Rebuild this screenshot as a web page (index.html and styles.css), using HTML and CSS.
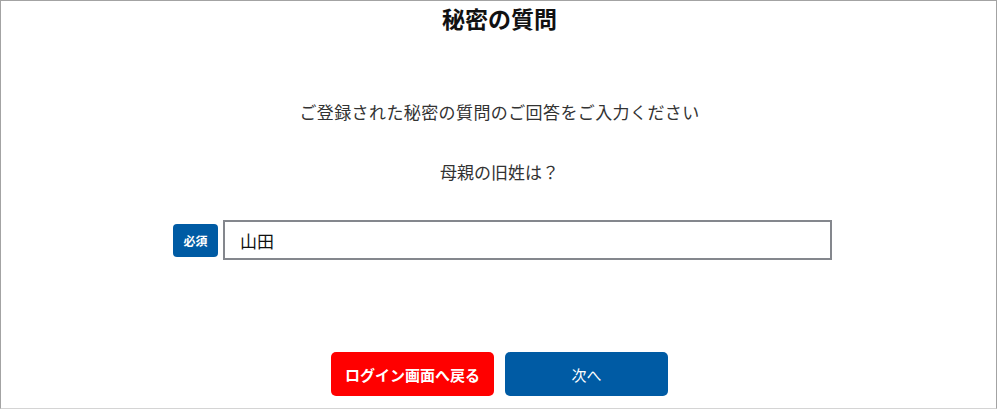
FILE: index.html
```html
<!DOCTYPE html>
<html lang="ja">
<head>
<meta charset="utf-8">
<title>秘密の質問</title>
<link rel="stylesheet" href="styles.css">
</head>
<body>
<div class="frame">
  <h1 class="title">秘密の質問</h1>
  <p class="lead">ご登録された秘密の質問のご回答をご入力ください</p>
  <p class="question">母親の旧姓は？</p>
  <div class="answer-row">
    <span class="badge">必須</span>
    <input class="answer" type="text" value="山田">
  </div>
  <div class="actions">
    <button class="btn btn-back" type="button">ログイン画面へ戻る</button>
    <button class="btn btn-next" type="button">次へ</button>
  </div>
</div>
</body>
</html>
```
FILE: styles.css
```css
* { box-sizing: border-box; }
html, body {
  margin: 0;
  padding: 0;
  background: #fff;
}
body {
  font-family: "Noto Sans CJK JP", "Noto Sans", sans-serif;
  color: #333;
}
.frame {
  width: 997px;
  height: 409px;
  border-top: 1px solid #a3a3a3;
  border-left: 1px solid #a3a3a3;
  border-right: 1px solid #a3a3a3;
  border-bottom: 1px solid #d4d4d4;
  display: flex;
  flex-direction: column;
  overflow: hidden;
}
.title {
  margin: 0;
  height: 35px;
  line-height: 35px;
  font-size: 23px;
  font-weight: 700;
  color: #111;
  text-align: center;
  padding-left: 2px;
}
.lead {
  margin: 64px 0 0;
  height: 24px;
  line-height: 24px;
  font-size: 17px;
  letter-spacing: 0.4px;
  text-align: center;
  padding-left: 2px;
}
.question {
  margin: 36px 0 0;
  height: 24px;
  line-height: 24px;
  font-size: 17px;
  text-align: center;
  padding-left: 2px;
}
.answer-row {
  margin-top: 36px;
  display: flex;
  justify-content: center;
  align-items: center;
  gap: 5px;
  padding-left: 8px;
  height: 40px;
}
.badge {
  width: 45px;
  height: 33px;
  background: #005ba4;
  color: #fff;
  border-radius: 4px;
  font-size: 12px;
  font-weight: 700;
  display: flex;
  align-items: center;
  justify-content: center;
}
.answer {
  width: 609px;
  height: 40px;
  border: 2px solid #84878d;
  padding: 0 15px;
  font-family: "Noto Sans CJK JP", "Noto Sans", sans-serif;
  font-size: 17px;
  color: #111;
  outline: none;
  background: #fff;
}
.actions {
  margin-top: 92px;
  display: flex;
  justify-content: center;
  gap: 11px;
  padding-left: 2px;
}
.btn {
  width: 163px;
  height: 44px;
  border: none;
  border-radius: 5px;
  color: #fff;
  font-family: "Noto Sans CJK JP", "Noto Sans", sans-serif;
  font-size: 15px;
  padding: 0;
  cursor: pointer;
}
.btn-back {
  background: #ff0000;
  font-weight: 700;
}
.btn-next {
  background: #005ba4;
  font-weight: 400;
}
```
